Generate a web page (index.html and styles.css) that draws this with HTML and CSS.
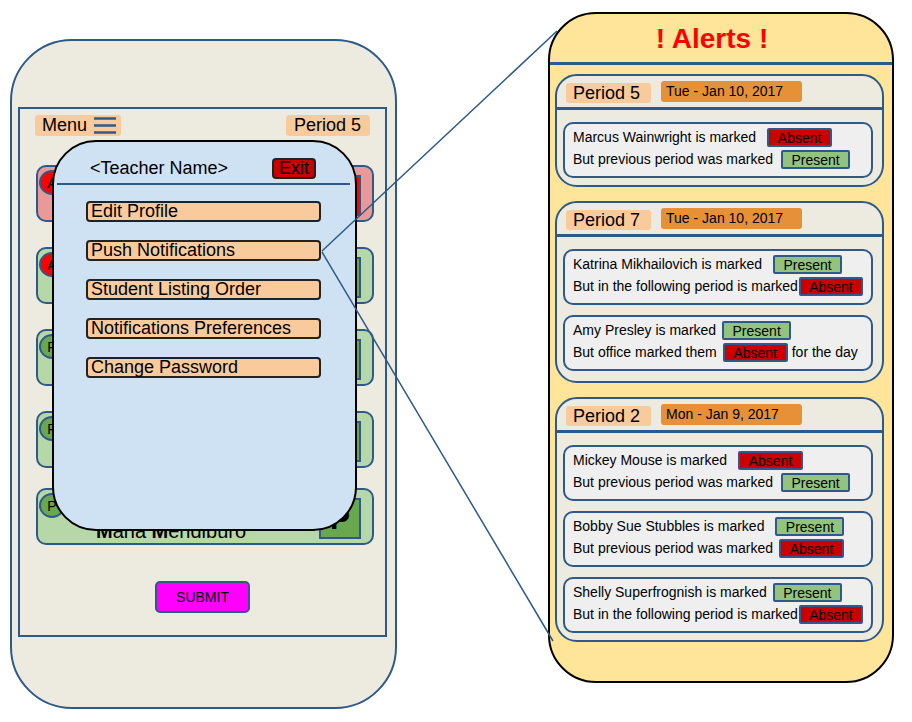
FILE: index.html
```html
<!DOCTYPE html>
<html lang="en">
  <head>
    <meta charset="UTF-8" />
    <meta name="viewport" content="width=device-width, initial-scale=1.0" />
    <title>Attendance Alerts Mockup</title>
    <link rel="stylesheet" href="styles.css">
  </head>
  <body>
    <div class="page">
      <!-- Phone with menu open -->
      <div class="phone">
        <div class="screen">
          <div class="screen-head">
            <span class="tag menu-tag">Menu
              <svg class="burger" width="24" height="21" viewBox="0 0 24 21">
                <path d="M1 3.5H23M1 10.5H23M1 17.5H23" stroke="#2e5a8a" stroke-width="2.5" fill="none" />
              </svg>
            </span>
            <span class="tag period-right">Period 5</span>
          </div>

          <div class="students">
            <div class="student pink">
              <span class="dot red">A</span>
              <span class="name"></span>
              <span class="mark red"></span>
            </div>
            <div class="student">
              <span class="dot red">A</span>
              <span class="name"></span>
              <span class="mark"></span>
            </div>
            <div class="student">
              <span class="dot">P</span>
              <span class="name"></span>
              <span class="mark"></span>
            </div>
            <div class="student">
              <span class="dot">P</span>
              <span class="name"></span>
              <span class="mark"></span>
            </div>
            <div class="student last">
              <span class="dot">P</span>
              <span class="name"><b>M</b>aria <b>M</b>endiburo</span>
              <span class="mark">P</span>
            </div>
          </div>

          <button class="submit" type="button">SUBMIT</button>

          <!-- Menu overlay -->
          <div class="menu">
            <div class="menu-head">
              <span>&lt;Teacher Name&gt;</span>
              <span class="exit">Exit</span>
            </div>
            <div class="menu-rule"></div>
            <div class="menu-list">
              <div class="menu-item">Edit Profile</div>
              <div class="menu-item">Push Notifications</div>
              <div class="menu-item">Student Listing Order</div>
              <div class="menu-item">Notifications Preferences</div>
              <div class="menu-item">Change Password</div>
            </div>
          </div>
        </div>
      </div>

      <!-- Alerts panel -->
      <div class="alerts">
        <div class="alerts-title">! Alerts !</div>
        <div class="alerts-rule"></div>
        <div class="periods">
          <div class="period">
            <div class="period-head">
              <span class="period-tag">Period 5</span>
              <span class="date-tag">Tue - Jan 10, 2017</span>
            </div>
            <div class="period-items">
              <div class="alert-item">
                <div class="alert-line first">Marcus Wainwright is marked <span class="status absent">Absent</span></div>
                <div class="alert-line">But previous period was marked <span class="status present">Present</span></div>
              </div>
            </div>
          </div>

          <div class="period loose">
            <div class="period-head">
              <span class="period-tag">Period 7</span>
              <span class="date-tag">Tue - Jan 10, 2017</span>
            </div>
            <div class="period-items">
              <div class="alert-item">
                <div class="alert-line first">Katrina Mikhailovich is marked <span class="status present">Present</span></div>
                <div class="alert-line">But in the following period is marked<span class="status absent tight">Absent</span></div>
              </div>
              <div class="alert-item">
                <div class="alert-line first short">Amy Presley is marked <span class="status present">Present</span></div>
                <div class="alert-line short">But office marked them <span class="status absent">Absent</span><span class="after">for the day</span></div>
              </div>
            </div>
          </div>

          <div class="period">
            <div class="period-head">
              <span class="period-tag">Period 2</span>
              <span class="date-tag">Mon - Jan 9, 2017</span>
            </div>
            <div class="period-items">
              <div class="alert-item">
                <div class="alert-line first">Mickey Mouse is marked <span class="status absent">Absent</span></div>
                <div class="alert-line">But previous period was marked <span class="status present">Present</span></div>
              </div>
              <div class="alert-item">
                <div class="alert-line first">Bobby Sue Stubbles is marked <span class="status present">Present</span></div>
                <div class="alert-line short">But previous period was marked <span class="status absent">Absent</span></div>
              </div>
              <div class="alert-item">
                <div class="alert-line first short">Shelly Superfrognish is marked <span class="status present">Present</span></div>
                <div class="alert-line">But in the following period is marked<span class="status absent tight">Absent</span></div>
              </div>
            </div>
          </div>
        </div>
      </div>
    </div>

    <!-- Callout lines from the menu item to the alerts panel -->
    <svg class="links" width="912" height="722" viewBox="0 0 912 722">
      <path d="M322 251L557 31M322 252L553 641" stroke="#2e5a8a" stroke-width="1.5" fill="none" />
    </svg>
  </body>
</html>
```

FILE: styles.css
```css
body {
  margin: 0;
  width: 912px;
  height: 722px;
  position: relative;
  overflow: hidden;
  background: #ffffff;
  font-family: "Liberation Sans", Arial, sans-serif;
  color: #000;
}

.page {
  display: flex;
  align-items: flex-start;
}

/* Phone */
.phone {
  box-sizing: border-box;
  width: 387px;
  height: 670px;
  margin: 39px 0 0 10px;
  padding: 66px 8px 0 6px;
  border: 2px solid #2e5a8a;
  border-radius: 62px;
  background: #edeae0;
}

.screen {
  position: relative;
  box-sizing: border-box;
  height: 530px;
  padding-top: 6px;
  border: 2px solid #2e5a8a;
  display: flex;
  flex-direction: column;
}

.screen-head {
  display: flex;
  justify-content: space-between;
  padding: 0 15px;
}

.tag {
  display: inline-flex;
  align-items: center;
  height: 21px;
  line-height: 21px;
  font-size: 18px;
  background: #f9cb9c;
  border-radius: 3px;
}

.menu-tag {
  padding: 0 4px 0 7px;
}

.burger {
  margin-left: 6px;
}

.period-right {
  padding: 0 9px 0 8px;
}

.students {
  margin-top: 29px;
  padding: 0 11px 0 16px;
  display: flex;
  flex-direction: column;
  gap: 25px;
}

.student {
  box-sizing: border-box;
  height: 57px;
  padding: 3px 11px 0 1px;
  display: flex;
  align-items: flex-start;
  border: 2px solid #2e5a8a;
  border-radius: 10px;
  background: #b6d7a8;
}

.student.pink {
  background: #ea9999;
}

.student.last {
  margin-top: -5px;
}

.dot {
  box-sizing: border-box;
  width: 26px;
  height: 25px;
  border: 2px solid #2e5a8a;
  border-radius: 50%;
  background: #6aa84f;
  display: flex;
  align-items: center;
  justify-content: center;
  font-size: 14px;
}

.dot.red {
  background: #ff0000;
}

.name {
  flex: 1;
  align-self: flex-end;
  margin: 0 0 2px 31px;
  font-size: 20px;
  line-height: 20px;
  white-space: nowrap;
}

.mark {
  box-sizing: border-box;
  width: 42px;
  height: 41px;
  margin-top: 5px;
  border: 2px solid #2e5a8a;
  background: #6aa84f;
  display: flex;
  align-items: center;
  justify-content: center;
  font-size: 30px;
  font-weight: bold;
}

.mark.red {
  background: #ff0000;
}

.submit {
  display: block;
  box-sizing: border-box;
  width: 95px;
  height: 32px;
  margin: 36px auto 0;
  padding: 0;
  border: 2px solid #2e5a8a;
  border-radius: 5px;
  background: #ff00ff;
  font-family: "Liberation Sans", Arial, sans-serif;
  font-size: 14px;
  color: #000;
}

/* Menu overlay */
.menu {
  position: absolute;
  left: 32px;
  top: 31px;
  box-sizing: border-box;
  width: 305px;
  height: 391px;
  border: 2px solid #000;
  border-radius: 44px;
  background: #cfe2f3;
}

.menu-head {
  display: flex;
  justify-content: space-between;
  align-items: center;
  padding: 16px 39px 0 36px;
  font-size: 18px;
}

.exit {
  box-sizing: border-box;
  width: 44px;
  height: 21px;
  line-height: 17px;
  text-align: center;
  border: 2px solid #222;
  border-radius: 4px;
  background: #cc0000;
}

.menu-rule {
  margin: 4px 5px 0 3px;
  border-top: 2px solid #2e5a8a;
}

.menu-list {
  display: flex;
  flex-direction: column;
  gap: 18px;
  padding: 16px 0 0 32px;
}

.menu-item {
  box-sizing: border-box;
  width: 235px;
  height: 21px;
  padding-left: 3px;
  line-height: 17px;
  font-size: 18px;
  border: 2px solid #222;
  border-radius: 4px;
  background: #f9cb9c;
}

/* Alerts panel */
.alerts {
  box-sizing: border-box;
  width: 346px;
  height: 671px;
  margin: 12px 0 0 151px;
  border: 2px solid #000;
  border-radius: 48px;
  background: #ffe599;
}

.alerts-title {
  padding: 9px 18px 7px 0;
  text-align: center;
  font-size: 28px;
  line-height: 32px;
  font-weight: bold;
  color: #ff0000;
}

.alerts-rule {
  border-top: 3px solid #2e5a8a;
}

.periods {
  padding: 9px 8px 0 5px;
  display: flex;
  flex-direction: column;
  gap: 14px;
}

.period {
  padding-bottom: 7px;
  border: 2px solid #2e5a8a;
  border-radius: 22px;
  background: #edeae0;
}

.period.loose {
  padding-bottom: 10px;
}

.period-head {
  display: flex;
  align-items: flex-start;
  height: 31px;
  padding-left: 9px;
  border-bottom: 3px solid #2e5a8a;
}

.period-tag {
  margin-top: 7px;
  padding: 0 11px 0 7px;
  height: 20px;
  line-height: 20px;
  font-size: 18px;
  background: #f9cb9c;
  border-radius: 3px;
}

.date-tag {
  box-sizing: border-box;
  width: 141px;
  height: 21px;
  margin: 5px 0 0 10px;
  padding-left: 5px;
  line-height: 21px;
  font-size: 14px;
  background: #e69138;
  border-radius: 3px;
}

.period-items {
  padding: 12px 9px 0 6px;
  display: flex;
  flex-direction: column;
  gap: 10px;
}

.alert-item {
  padding: 2px 8px 6px;
  border: 2px solid #2e5a8a;
  border-radius: 10px;
  background: #efefef;
  font-size: 14px;
}

.alert-line {
  display: flex;
  align-items: center;
  height: 22px;
  white-space: nowrap;
}

.status {
  box-sizing: border-box;
  height: 19px;
  margin-left: 8px;
  padding-top: 2px;
  line-height: 13px;
  text-align: center;
  border: 2px solid #2e5a8a;
  border-radius: 2px;
}

.alert-line.first .status {
  margin-left: 11px;
}

.alert-line.short .status {
  margin-left: 6px;
}

.status.tight {
  margin-left: 1px;
}

.absent {
  width: 65px;
  background: #cc0000;
}

.present {
  width: 69px;
  background: #93c47d;
}

.after {
  margin-left: 4px;
}

/* Callout lines */
.links {
  position: absolute;
  top: 0;
  left: 0;
  pointer-events: none;
}
```
